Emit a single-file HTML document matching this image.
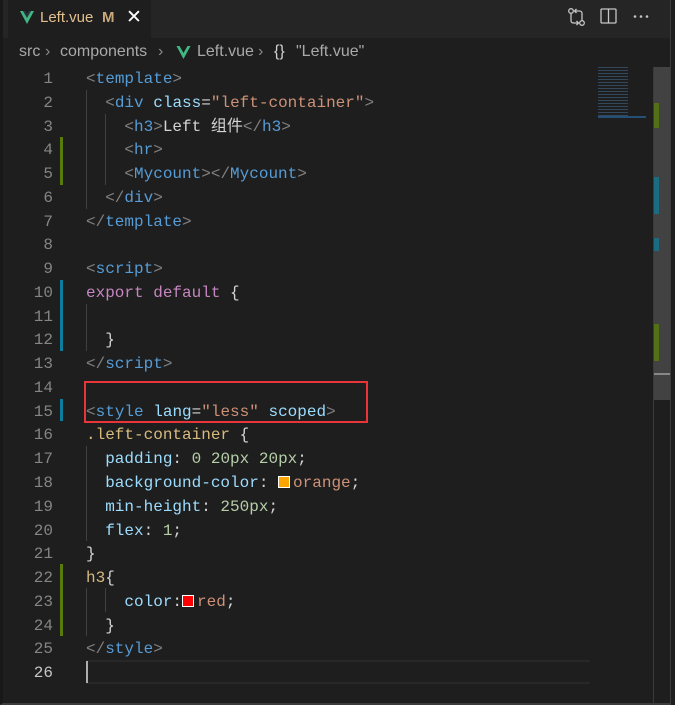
<!DOCTYPE html>
<html><head><meta charset="utf-8"><style>
*{margin:0;padding:0;box-sizing:border-box}
body{width:675px;height:705px;background:#1e1e1e;overflow:hidden;position:relative;font-family:"Liberation Sans","Noto Sans CJK SC",sans-serif}
.tabbar{position:absolute;left:0;top:0;width:671px;height:38px;background:#252526}
.tab{position:absolute;left:8px;top:0;width:143px;height:38px;background:#1e1e1e;color:#e2c08d;font-size:15px}
.brd{position:absolute;left:0;top:0;width:671px;height:705px;border-right:1px solid #3c3c3c;border-bottom:2px solid #3c3c3c;border-left:3px solid #181818;pointer-events:none}
.bc{position:absolute;top:43px;color:#a9a9a9;font-size:16px;white-space:nowrap}
.ln{position:absolute;left:0;width:53px;text-align:right;color:#858585;font-family:"Liberation Mono",monospace;font-size:16px;line-height:23.76px}
.code{position:absolute;left:86px;font-family:"Liberation Mono","Noto Sans CJK SC",monospace;font-size:16px;line-height:23.76px;white-space:pre;color:#d4d4d4}
.t{color:#569cd6}.b{color:#808080}.a{color:#9cdcfe}.s{color:#ce9178}.k{color:#c586c0}.sel{color:#d7ba7d}.n{color:#b5cea8}
.mk{position:absolute;left:60px;width:3px}
.g{position:absolute;width:1px;background:#404040}
.sw{display:inline-block;width:12px;height:12px;border:1px solid #fff;vertical-align:-1px;margin-right:3px}
</style></head><body>
<div class="tabbar"></div>
<div class="tab">
<svg style="position:absolute;left:12px;top:11px" width="14" height="13" viewBox="0 0 14 13"><path d="M0 0h3l4 7 4-7h3L7 13z" fill="#41b883"/><path d="M3 0h2.5L7 3 8.5 0H11L7 7z" fill="#35495e" opacity=".5"/></svg>
<span style="position:absolute;left:32px;top:9px">Left.vue</span>
<span style="position:absolute;left:94px;top:9px;font-weight:bold;color:#c9a87b">M</span>
<span style="position:absolute;left:118px;top:6px;color:#fff;font-size:19px">✕</span>
</div>
<svg style="position:absolute;left:567px;top:7px" width="20" height="20" viewBox="0 0 20 20" fill="none" stroke="#c5c5c5" stroke-width="1.3"><circle cx="4" cy="4" r="2.3"/><circle cx="15" cy="16" r="2.3"/><path d="M4 6.5v7c0 2 1 2.5 3 2.5h4"/><path d="M9.5 14l2 2-2 2"/><path d="M15 13.5v-7c0-2-1-2.5-3-2.5H8"/><path d="M9.5 2l-2 2 2 2"/></svg>
<svg style="position:absolute;left:600px;top:8px" width="18" height="17" viewBox="0 0 18 17" fill="none" stroke="#c5c5c5" stroke-width="1.3"><rect x="1" y="1" width="15" height="14" rx="1"/><path d="M8.5 1v14"/></svg>
<svg style="position:absolute;left:632px;top:14px" width="18" height="5"><circle cx="3" cy="2.5" r="1.3" fill="#c5c5c5"/><circle cx="9" cy="2.5" r="1.3" fill="#c5c5c5"/><circle cx="15" cy="2.5" r="1.3" fill="#c5c5c5"/></svg>

<div class="bc" style="left:19px">src</div>
<div class="bc" style="left:45px;color:#8a8a8a">›</div>
<div class="bc" style="left:60px">components</div>
<div class="bc" style="left:158px;color:#8a8a8a">›</div>
<svg style="position:absolute;left:176px;top:46px" width="15" height="13" viewBox="0 0 14 13"><path d="M0 0h3l4 7 4-7h3L7 13z" fill="#41b883"/></svg>
<div class="bc" style="left:197px">Left.vue</div>
<div class="bc" style="left:258px;color:#8a8a8a">›</div>
<div class="bc" style="left:274px;color:#d4d4d4">{}</div>
<div class="bc" style="left:296px">"Left.vue"</div>

<div class="mk" style="top:137px;height:48px;background:#587c0c"></div>
<div class="mk" style="top:280px;height:71px;background:#0c7d9d"></div>
<div class="mk" style="top:399px;height:22px;background:#0c7d9d"></div>
<div class="mk" style="top:564px;height:72px;background:#587c0c"></div>

<div class="g" style="left:86px;top:90px;height:119px"></div>
<div class="g" style="left:105px;top:114px;height:71px"></div>
<div class="g" style="left:86px;top:304px;height:47px"></div>
<div class="g" style="left:86px;top:446px;height:95px"></div>
<div class="g" style="left:86px;top:588px;height:48px"></div>
<div class="g" style="left:105px;top:588px;height:24px"></div>

<div style="position:absolute;left:86px;top:660px;width:504px;height:24px;border-top:2px solid #282828;border-bottom:2px solid #282828"></div>
<div style="position:absolute;left:86px;top:661px;width:2px;height:22px;background:#aeafad"></div>

<div class="ln" style="top:68px">1<br>2<br>3<br>4<br>5<br>6<br>7<br>8<br>9<br>10<br>11<br>12<br>13<br>14<br>15<br>16<br>17<br>18<br>19<br>20<br>21<br>22<br>23<br>24<br>25<br><span style="color:#c6c6c6">26</span></div>
<div class="code" style="top:68px"><span class="b">&lt;</span><span class="t">template</span><span class="b">&gt;</span>
  <span class="b">&lt;</span><span class="t">div</span> <span class="a">class</span>=<span class="s">"left-container"</span><span class="b">&gt;</span>
    <span class="b">&lt;</span><span class="t">h3</span><span class="b">&gt;</span>Left 组件<span class="b">&lt;/</span><span class="t">h3</span><span class="b">&gt;</span>
    <span class="b">&lt;</span><span class="t">hr</span><span class="b">&gt;</span>
    <span class="b">&lt;</span><span class="t">Mycount</span><span class="b">&gt;&lt;/</span><span class="t">Mycount</span><span class="b">&gt;</span>
  <span class="b">&lt;/</span><span class="t">div</span><span class="b">&gt;</span>
<span class="b">&lt;/</span><span class="t">template</span><span class="b">&gt;</span>

<span class="b">&lt;</span><span class="t">script</span><span class="b">&gt;</span>
<span class="k">export</span> <span class="k">default</span> {

  }
<span class="b">&lt;/</span><span class="t">script</span><span class="b">&gt;</span>

<span class="b">&lt;</span><span class="t">style</span> <span class="a">lang</span>=<span class="s">"less"</span> <span class="a">scoped</span><span class="b">&gt;</span>
<span class="sel">.left-container</span> {
  <span class="a">padding</span>: <span class="n">0</span> <span class="n">20px</span> <span class="n">20px</span>;
  <span class="a">background-color</span>: <span class="sw" style="background:#ffa500"></span><span class="s">orange</span>;
  <span class="a">min-height</span>: <span class="n">250px</span>;
  <span class="a">flex</span>: <span class="n">1</span>;
}
<span class="sel">h3</span>{
    <span class="a">color</span>:<span class="sw" style="background:#f00"></span><span class="s">red</span>;
  }
<span class="b">&lt;/</span><span class="t">style</span><span class="b">&gt;</span>
</div>

<div style="position:absolute;left:84px;top:381px;width:284px;height:42px;border:2px solid #e8353a"></div>

<div style="position:absolute;left:653px;top:67px;width:1px;height:638px;background:#3a3a3a"></div>
<div style="position:absolute;left:654px;top:67px;width:16px;height:333px;background:#424242"></div>
<div style="position:absolute;left:654px;top:103px;width:5px;height:25px;background:#587c0c;opacity:.8"></div>
<div style="position:absolute;left:654px;top:177px;width:5px;height:37px;background:#0c7d9d;opacity:.7"></div>
<div style="position:absolute;left:654px;top:238px;width:5px;height:13px;background:#0c7d9d;opacity:.7"></div>
<div style="position:absolute;left:654px;top:324px;width:5px;height:37px;background:#587c0c;opacity:.8"></div>
<div style="position:absolute;left:654px;top:373px;width:16px;height:2px;background:#888"></div>
<div style="position:absolute;left:598px;top:67px;width:30px;height:50px;opacity:.45;background:repeating-linear-gradient(#4a7aa8 0 1px,transparent 1px 3px)"></div>
<div style="position:absolute;left:598px;top:116px;width:48px;height:2px;background:#264f78"></div>
<div class="brd"></div>
</body></html>
